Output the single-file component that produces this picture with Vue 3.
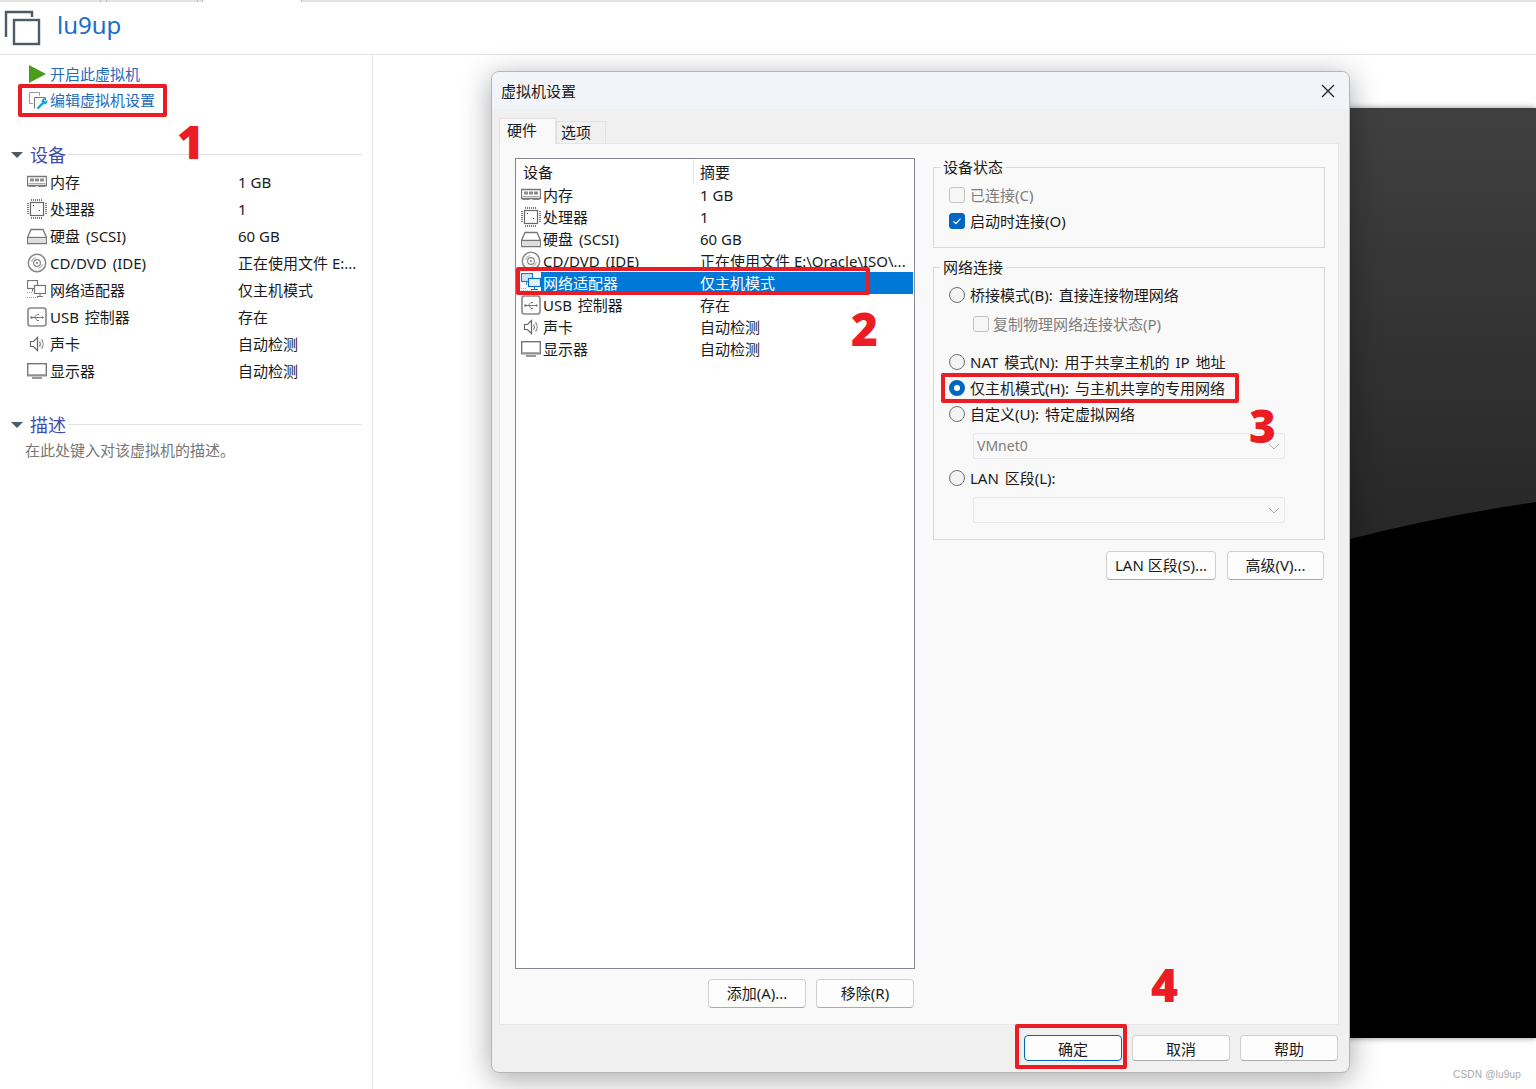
<script setup>
const devices = [
  { icon: 'mem', name: '内存', summary: '1 GB' },
  { icon: 'cpu', name: '处理器', summary: '1' },
  { icon: 'disk', name: '硬盘 (SCSI)', summary: '60 GB' },
  { icon: 'cd', name: 'CD/DVD (IDE)', summary: '正在使用文件 E:\\Oracle\\ISO\\...', short: '正在使用文件 E:...' },
  { icon: 'net', name: '网络适配器', summary: '仅主机模式', selected: true },
  { icon: 'usb', name: 'USB 控制器', summary: '存在' },
  { icon: 'sound', name: '声卡', summary: '自动检测' },
  { icon: 'display', name: '显示器', summary: '自动检测' }
]
const stripTabs = [101, 6, 91, 5, 99, 1234]
</script>

<template>
  <div class="page">
    <svg class="sprite" width="0" height="0" aria-hidden="true">
      <symbol id="i-mem" viewBox="0 0 20 20">
        <path d="M.5 4.500h19v9h-19z" fill="#fff" stroke="#777" stroke-width="1.300" />
        <path d="M3 6.500h4v3H3zM8 6.500h4v3H8zM13 6.500h4v3h-4z" fill="#8c8c8c" />
        <path d="M1.500 11.500h17" stroke="#aaa" />
        <path d="M1.500 14.500h7M11.500 14.500h7" stroke="#888" />
      </symbol>
      <symbol id="i-cpu" viewBox="0 0 20 20">
        <rect x="3.500" y="3.500" width="13" height="13" fill="#fff" stroke="#666" stroke-width="1.200" />
        <path d="M4.500 0v2M6.500 0v2M8.500 0v2M10.500 0v2M12.500 0v2M14.500 0v2M4.500 18v2M6.500 18v2M8.500 18v2M10.500 18v2M12.500 18v2M14.500 18v2M0 4.500h2M0 6.500h2M0 8.500h2M0 10.500h2M0 12.500h2M0 14.500h2M18 4.500h2M18 6.500h2M18 8.500h2M18 10.500h2M18 12.500h2M18 14.500h2" stroke="#777" />
        <path d="M6 6h1v1H6zM12 11h1v1h-1z" fill="#444" />
      </symbol>
      <symbol id="i-disk" viewBox="0 0 20 20">
        <path d="M4 3.500h12l3.500 8v6H.5v-6z" fill="#fff" stroke="#777" stroke-width="1.300" />
        <path d="M1 11.500h18" stroke="#777" stroke-width="1.300" />
        <path d="M1.500 12.500h17v4h-17z" fill="#ddd" />
      </symbol>
      <symbol id="i-cd" viewBox="0 0 20 20">
        <circle cx="10" cy="10" r="8.700" fill="#fff" stroke="#888" stroke-width="1.500" />
        <circle cx="10" cy="10" r="3.400" fill="#fff" stroke="#888" stroke-width="1.200" />
        <circle cx="10" cy="10" r="1" fill="#777" />
        <path d="M4.500 9a5.500 5.500 0 0 1 4.500-4.500M11 15.500a5.500 5.500 0 0 0 4.500-4.500" fill="none" stroke="#aaa" />
      </symbol>
      <symbol id="i-net" viewBox="0 0 20 20">
        <path d="M0 12.500h6M0 17.500h12" stroke="#999" stroke-dasharray="1 1" />
        <rect x=".5" y=".5" width="10" height="8" fill="#fff" stroke="#777" stroke-width="1.200" />
        <path d="M5.500 9v2.500" stroke="#777" />
        <rect x="7.500" y="5.500" width="11" height="8" fill="#fff" stroke="#777" stroke-width="1.200" />
        <path d="M13 14v2M10 16.500h6" stroke="#777" />
      </symbol>
      <symbol id="i-net-sel" viewBox="0 0 20 20">
        <rect width="20" height="20" fill="#fff" />
        <path d="M0 17.500h12M0 15.500h6" stroke="#bbb" stroke-dasharray="1 1" />
        <rect x=".5" y=".5" width="11" height="8" fill="#cfe6f8" stroke="#1d7fd0" stroke-width="1.200" />
        <path d="M5.500 9v3" stroke="#1d7fd0" />
        <rect x="7.500" y="5.500" width="12" height="8" fill="#e3f2fc" stroke="#0b6fc4" stroke-width="1.200" />
        <path d="M13.500 14v2M10 16.500h7" stroke="#0b6fc4" />
      </symbol>
      <symbol id="i-usb" viewBox="0 0 20 20">
        <rect x="1" y="1" width="18" height="18" rx="2.500" fill="#fff" stroke="#888" stroke-width="1.600" />
        <path d="M4 10.500h11M7 10.500l3-3h2M8 10.500l2 3h2" fill="none" stroke="#777" />
        <circle cx="4.500" cy="10.500" r="1.300" fill="#777" />
        <path d="M15 9l2 1.500-2 1.500z" fill="#777" />
      </symbol>
      <symbol id="i-sound" viewBox="0 0 20 20">
        <path d="M3.500 7.500h3l4-4v13l-4-4h-3z" fill="#fff" stroke="#666" stroke-width="1.200" />
        <path d="M12.500 7.500a4 4 0 0 1 0 5M14.500 5.500a7 7 0 0 1 0 9" fill="none" stroke="#888" stroke-width="1.200" />
      </symbol>
      <symbol id="i-display" viewBox="0 0 20 20">
        <rect x=".7" y="2.700" width="18.600" height="12" fill="#fff" stroke="#777" stroke-width="1.400" />
        <path d="M1 13h18v1.500H1z" fill="#aaa" />
        <path d="M5 16h10v2H5z" fill="#999" />
      </symbol>
    </svg>

    <div class="tabstrip">
      <span v-for="(w, i) in stripTabs" :key="i" :style="{ width: w + 'px' }" :class="{ light: i === 4 }"></span>
    </div>

    <header class="head">
      <svg class="vm-icon" width="37" height="36" viewBox="0 0 37 36">
        <path d="M2 27V2h26v5" fill="none" stroke="#4b5b68" stroke-width="2.400" />
        <rect x="10" y="10" width="25" height="24" fill="none" stroke="#4b5b68" stroke-width="2.400" />
      </svg>
      <span class="vm-name">lu9up</span>
    </header>

    <div class="body">
      <aside class="side">
        <div class="action">
          <svg width="17" height="18" viewBox="0 0 17 18"><path d="M0 0l17 9-17 9z" fill="#4b9b1c" /></svg>
          <span>开启此虚拟机</span>
        </div>
        <div class="action">
          <svg width="20" height="20" viewBox="0 0 20 20">
            <path d="M4 13.500H.5v-11h10v3" fill="none" stroke="#999" />
            <path d="M5.500 18.500v-11h11v3" fill="none" stroke="#777" />
            <path d="M8.500 18.500l5.500-5.500" fill="none" stroke="#12a3d8" stroke-width="2.400" />
            <path d="M12.500 12a3.300 3.300 0 0 1 4.300-3.500l-1.800 2 1.300 1.300 2-1.800a3.300 3.300 0 0 1-3.600 4.300z" fill="#12a3d8" />
          </svg>
          <span>编辑虚拟机设置</span>
        </div>

        <div class="section first">
          <i class="caret"></i>
          <span class="section-name">设备</span>
          <i class="section-line"></i>
        </div>
        <div v-for="d in devices" :key="d.icon" class="side-row">
          <svg width="20" height="20"><use :href="'#i-' + d.icon" /></svg>
          <span class="spaced">{{ d.name }}</span>
          <span>{{ d.short || d.summary }}</span>
        </div>

        <div class="section second">
          <i class="caret"></i>
          <span class="section-name">描述</span>
          <i class="section-line"></i>
        </div>
        <p class="desc">在此处键入对该虚拟机的描述。</p>
      </aside>
    </div>

    <div class="stage">
      <svg width="100%" height="100%" viewBox="0 0 1036 930" preserveAspectRatio="none">
        <defs>
          <linearGradient id="stage-fill" x1="0" y1="0" x2="0" y2="1">
            <stop offset="0" stop-color="#404040" />
            <stop offset=".5" stop-color="#252525" />
          </linearGradient>
        </defs>
        <rect width="1036" height="930" fill="url(#stage-fill)" />
        <path d="M850 431Q940 408 1036 394V930H850z" fill="#000" />
      </svg>
    </div>

    <section class="dialog">
      <div class="title">
        <span>虚拟机设置</span>
        <svg width="14" height="14" viewBox="0 0 14 14"><path d="M1 1l12 12M13 1L1 13" stroke="#222" stroke-width="1.300" /></svg>
      </div>
      <div class="tabs">
        <span class="tab active">硬件</span>
        <span class="tab">选项</span>
      </div>

      <div class="panel">
        <div class="left">
          <div class="list">
            <div class="list-head">
              <span class="col-a">设备</span>
              <span class="col-b">摘要</span>
            </div>
            <div v-for="d in devices" :key="d.icon" class="row" :class="{ selected: d.selected }">
              <svg width="20" height="20"><use :href="'#i-' + (d.selected ? 'net-sel' : d.icon)" /></svg>
              <div class="row-body">
                <span class="row-name spaced">{{ d.name }}</span>
                <span>{{ d.summary }}</span>
              </div>
            </div>
          </div>
          <div class="btns">
            <button class="btn">添加(A)...</button>
            <button class="btn">移除(R)</button>
          </div>
        </div>

        <div class="right">
          <fieldset class="group state">
            <legend>设备状态</legend>
            <label class="opt off"><i class="check"></i>已连接(C)</label>
            <label class="opt">
              <i class="check on">
                <svg width="10" height="10" viewBox="0 0 10 10"><path d="M1.500 5.300l2.400 2.300 4.600-5" fill="none" stroke="#fff" stroke-width="1.200" /></svg>
              </i>启动时连接(O)
            </label>
          </fieldset>

          <fieldset class="group network">
            <legend>网络连接</legend>
            <label class="opt"><i class="radio"></i>桥接模式(B): 直接连接物理网络</label>
            <label class="opt off sub"><i class="check"></i>复制物理网络连接状态(P)</label>
            <label class="opt nat"><i class="radio"></i>NAT 模式(N): 用于共享主机的 IP 地址</label>
            <label class="opt"><i class="radio on"></i>仅主机模式(H): 与主机共享的专用网络</label>
            <label class="opt"><i class="radio"></i>自定义(U): 特定虚拟网络</label>
            <div class="select">
              <span class="vmnet">VMnet0</span>
              <svg width="12" height="7" viewBox="0 0 12 7"><path d="M1 1l5 5 5-5" fill="none" stroke="#aaa" /></svg>
            </div>
            <label class="opt lan"><i class="radio"></i>LAN 区段(L):</label>
            <div class="select">
              <span></span>
              <svg width="12" height="7" viewBox="0 0 12 7"><path d="M1 1l5 5 5-5" fill="none" stroke="#aaa" /></svg>
            </div>
          </fieldset>

          <div class="net-btns">
            <button class="btn lan-btn">LAN 区段(S)...</button>
            <button class="btn adv-btn">高级(V)...</button>
          </div>
        </div>
      </div>

      <div class="footer">
        <button class="btn primary">确定</button>
        <button class="btn">取消</button>
        <button class="btn">帮助</button>
      </div>
    </section>

    <i class="mark mark-1"></i>
    <i class="mark mark-2"></i>
    <i class="mark mark-3"></i>
    <i class="mark mark-4"></i>
    <b class="num num-1">1</b>
    <b class="num num-2">2</b>
    <b class="num num-3">3</b>
    <b class="num num-4">4</b>
    <span class="watermark">CSDN @lu9up</span>
  </div>
</template>

<style>
html, body {
  margin: 0;
  background: #fff;
}
</style>

<style scoped>
.page {
  position: relative;
  width: 1536px;
  height: 1089px;
  overflow: hidden;
  background: #fff;
  color: #1a1a1a;
  font: 15px/22px "Noto Sans", "Noto Sans CJK SC", sans-serif;
}

.sprite {
  position: absolute;
}

.tabstrip {
  display: flex;
  height: 2px;
  background: #e3e3e3;
}

.tabstrip span {
  border-right: 1px solid #bbb;
  box-sizing: border-box;
}

.tabstrip span:last-child {
  border-right: 0;
}

.tabstrip .light {
  background: #fff;
}

.head {
  display: flex;
  align-items: center;
  height: 53px;
  box-sizing: border-box;
  padding-left: 4px;
  border-bottom: 1px solid #e4e4e4;
}

.vm-name {
  margin-left: 16px;
  margin-top: -6px;
  font-size: 24px;
  line-height: 30px;
  color: #1a6dc9;
}

.body {
  display: flex;
  height: 1034px;
}

.side {
  width: 373px;
  box-sizing: border-box;
  border-right: 1px solid #e6e6e6;
  padding-top: 6px;
}

.action {
  display: grid;
  grid-template-columns: 21px 1fr;
  align-items: center;
  height: 26px;
  padding-left: 29px;
  color: #2569bd;
}

.section {
  display: flex;
  align-items: center;
  height: 24px;
  margin-left: 11px;
  margin-right: 10px;
}

.section.first {
  margin-top: 30px;
  margin-bottom: 1px;
}

.section.second {
  margin-top: 29px;
}

.caret {
  width: 0;
  height: 0;
  border-left: 6px solid transparent;
  border-right: 6px solid transparent;
  border-top: 6px solid #4b5b68;
}

.section-name {
  margin-left: 7px;
  font-size: 18px;
  color: #3f4cab;
}

.section-line {
  flex: 1;
  height: 1px;
  margin-left: 2px;
  margin-top: -2px;
  background: #e0e0e0;
}

.side-row {
  display: grid;
  grid-template-columns: 23px 188px 1fr;
  align-items: center;
  height: 27px;
  padding-left: 27px;
}

.spaced {
  word-spacing: 2px;
}

.desc {
  margin: 1px 0 0 25px;
  line-height: 24px;
  color: #777;
}

.stage {
  position: absolute;
  left: 500px;
  right: 0;
  top: 108px;
  height: 930px;
  box-shadow: 0 0 6px rgba(0, 0, 0, 0.45);
}

.stage svg {
  display: block;
}

.dialog {
  position: absolute;
  left: 491px;
  top: 71px;
  width: 859px;
  height: 1002px;
  box-sizing: border-box;
  display: flex;
  flex-direction: column;
  background: #f0f0f0;
  border: 1px solid #b5b5b5;
  border-radius: 8px;
  box-shadow: 0 6px 30px rgba(0, 0, 0, 0.35);
  overflow: hidden;
}

.title {
  display: flex;
  align-items: center;
  justify-content: space-between;
  height: 37px;
  flex: none;
  padding: 0 14px 0 9px;
  background: #f1f5f9;
}

.tabs {
  display: flex;
  align-items: flex-end;
  height: 34px;
  flex: none;
  padding-left: 7px;
}

.tab {
  width: 50px;
  height: 22px;
  line-height: 20px;
  box-sizing: border-box;
  padding-left: 4px;
  background: #f0f0f0;
  border: 1px solid #e2e2e2;
  border-bottom: 0;
}

.tab.active {
  position: relative;
  z-index: 1;
  width: 57px;
  height: 26px;
  line-height: 22px;
  margin-bottom: -1px;
  padding-left: 7px;
  background: #f9f9f9;
  border-radius: 2px 2px 0 0;
}

.panel {
  display: flex;
  flex: none;
  height: 882px;
  box-sizing: border-box;
  margin: 0 10px 0 7px;
  padding: 14px 12px 0 15px;
  background: #f9f9f9;
  border: 1px solid #e6e6e6;
}

.left {
  width: 400px;
}

.list {
  height: 811px;
  box-sizing: border-box;
  background: #fff;
  border: 1px solid #828790;
}

.list-head {
  display: flex;
  height: 25px;
  line-height: 26px;
}

.col-a {
  width: 178px;
  padding-left: 7px;
  box-sizing: border-box;
  border-right: 1px solid #e5e5e5;
}

.col-b {
  padding-left: 6px;
}

.row {
  display: flex;
  align-items: center;
  height: 22px;
  padding-left: 5px;
}

.row svg {
  flex: none;
}

.row-body {
  display: flex;
  flex: 1;
  height: 22px;
  margin-right: 1px;
  padding-left: 2px;
}

.row-name {
  width: 157px;
  flex: none;
  white-space: nowrap;
}

.row.selected .row-body {
  background: #0078d7;
  color: #fff;
}

.btns {
  display: flex;
  justify-content: flex-end;
  gap: 10px;
  margin-top: 10px;
  margin-right: 1px;
}

.btn {
  width: 98px;
  height: 29px;
  padding: 0 0 1px;
  box-sizing: border-box;
  font: inherit;
  color: #1a1a1a;
  background: #fdfdfd;
  border: 1px solid #d0d0d0;
  border-bottom-color: #aaa;
  border-radius: 4px;
}

.right {
  width: 392px;
  margin-left: 18px;
}

.group {
  margin: 0;
  padding: 0 0 0 15px;
  box-sizing: border-box;
  border: 1px solid #d8d8d8;
  min-width: 0;
}

.group legend {
  margin-left: -9px;
  padding: 0 3px 0 3px;
  line-height: 20px;
}

.state {
  height: 91px;
  margin-top: -1px;
}

.network {
  height: 283px;
  margin-top: 9px;
}

.opt {
  display: flex;
  align-items: center;
  gap: 5px;
  height: 26px;
  word-spacing: 2px;
}

.state .opt:first-of-type {
  margin-top: 5px;
}

.network .opt:first-of-type {
  margin-top: 5px;
}

.off {
  color: #7d7d7d;
}

.sub {
  margin-top: 3px;
  margin-left: 24px;
  margin-bottom: 12px;
  gap: 4px;
}

.lan {
  margin-top: 6px;
}

.check,
.radio {
  display: flex;
  align-items: center;
  justify-content: center;
  width: 16px;
  height: 16px;
  flex: none;
  box-sizing: border-box;
  border: 1px solid #c4c4c4;
  border-radius: 3px;
  background: #f6f6f6;
}

.check.on {
  background: #0067c0;
  border-color: #0067c0;
}

.radio {
  border-color: #6e6e6e;
  border-radius: 50%;
  background: #f3f3f3;
}

.radio.on {
  background: #fff;
  border: 5px solid #0067c0;
}

.select {
  display: flex;
  align-items: center;
  justify-content: space-between;
  width: 312px;
  height: 26px;
  box-sizing: border-box;
  margin: 6px 0 0 24px;
  padding: 0 4px 0 3px;
  border: 1px solid #e8e8e8;
  background: #f9f9f9;
  color: #7d7d7d;
  border-radius: 2px;
}

.vmnet {
  font-size: 14px;
}

.net-btns {
  display: flex;
  justify-content: flex-end;
  gap: 11px;
  margin-top: 11px;
  margin-right: 1px;
}

.lan-btn {
  width: 110px;
}

.adv-btn {
  width: 97px;
}

.footer {
  display: flex;
  justify-content: flex-end;
  gap: 10px;
  padding: 10px 11px 0 0;
}

.footer .btn {
  height: 26px;
  padding: 1px 0 0;
}

.btn.primary {
  border-color: #0067c0;
}

.mark {
  position: absolute;
  box-sizing: border-box;
  border: 4px solid #ec1c24;
  border-radius: 2px;
  pointer-events: none;
}

.mark-1 {
  left: 18px;
  top: 84px;
  width: 149px;
  height: 33px;
}

.mark-2 {
  left: 516px;
  top: 267px;
  width: 354px;
  height: 28px;
}

.mark-3 {
  left: 941px;
  top: 373px;
  width: 298px;
  height: 30px;
}

.mark-4 {
  left: 1015px;
  top: 1024px;
  width: 112px;
  height: 45px;
}

.num {
  position: absolute;
  font: 800 46px/46px "Open Sans", sans-serif;
  color: #ec1c24;
}

.num-1 {
  left: 177px;
  top: 118px;
}

.num-2 {
  left: 851px;
  top: 305px;
}

.num-3 {
  left: 1249px;
  top: 402px;
}

.num-4 {
  left: 1151px;
  top: 961px;
}

.watermark {
  position: absolute;
  right: 15px;
  top: 1068px;
  font: 10px/14px "Liberation Sans", sans-serif;
  letter-spacing: 0.2px;
  color: #a8a8a8;
}
</style>
